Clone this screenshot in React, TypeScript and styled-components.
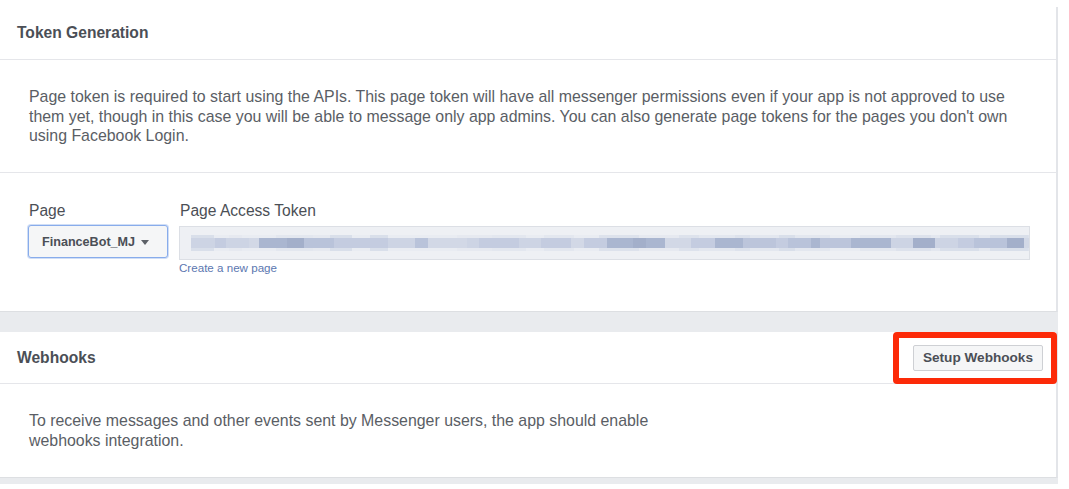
import React from "react";
import styled, { createGlobalStyle } from "styled-components";

const GlobalStyle = createGlobalStyle`
  html, body { margin: 0; padding: 0; background: #ffffff; }
  body { font-family: "Liberation Sans", Arial, Helvetica, sans-serif; }
  * { box-sizing: border-box; }
`;

// Deterministic pseudo-blur pattern for the hidden token
const buildStripe = (seed: number, palette: string[], total: number) => {
  let s = seed;
  const rnd = () => {
    s = (s * 9301 + 49297) % 233280;
    return s / 233280;
  };
  const stops: string[] = [];
  let x = 0;
  while (x < total) {
    const w = 8 + Math.floor(rnd() * 34);
    const c = palette[Math.floor(rnd() * palette.length)];
    stops.push(`${c} ${x}px`, `${c} ${Math.min(x + w, total)}px`);
    x += w;
  }
  return `linear-gradient(90deg, ${stops.join(", ")})`;
};

const midStripe = buildStripe(
  7,
  ["#b9c3da", "#c4cce0", "#aab6d0", "#cdd4e4", "#bcc5db", "#a3afca", "#d2d8e6"],
  840
);
const softStripe = buildStripe(
  31,
  ["#e6e9f0", "#dde2ec", "#e9ecf2", "#d9dfea", "#e3e7ef"],
  840
);

const Page = styled.div`
  width: 1058px;
  margin: 7px 0 0 0;
  background: #e9ebee;
  padding-bottom: 6px;
  display: flex;
  flex-direction: column;
  gap: 20px;
`;

const Card = styled.section`
  background: #ffffff;
  border-right: 2px solid #e3e5e9;
  border-bottom: 1px solid #dddfe2;
`;

const Header = styled.div<{ $height: number }>`
  position: relative;
  height: ${(p) => p.$height}px;
  border-bottom: 1px solid #e5e6ea;
  display: flex;
  align-items: center;
  justify-content: space-between;
  padding: 0 13px 0 17px;
`;

const Title = styled.h2`
  margin: 0;
  font-size: 15.6px;
  font-weight: bold;
  color: #4b4f56;
`;

const Body = styled.div<{ $bordered?: boolean }>`
  padding: 27px 20px 26.5px 29px;
  border-bottom: ${(p) => (p.$bordered ? "1px solid #e5e6ea" : "none")};
`;

const Text = styled.p<{ $width: number }>`
  margin: 0;
  font-size: 15.9px;
  line-height: 19.5px;
  color: #5a5e65;
  max-width: ${(p) => p.$width}px;
`;

const Form = styled.div`
  display: flex;
  gap: 11px;
  padding: 29px 0 35px 28px;
  height: 138px;
`;

const Field = styled.div<{ $width: number }>`
  width: ${(p) => p.$width}px;
  display: flex;
  flex-direction: column;
`;

const Label = styled.label`
  font-size: 15.6px;
  line-height: 18px;
  color: #4b4f56;
  padding-left: 1px;
`;

const Select = styled.div`
  margin-top: 5px;
  height: 33px;
  border: 1px solid #88aceb;
  box-shadow: 0 0 0 1px rgba(120, 160, 230, 0.35);
  border-radius: 3px;
  background: #f5f6f7;
  display: flex;
  align-items: center;
  gap: 6px;
  padding-left: 13px;
  font-size: 12.6px;
  font-weight: bold;
  color: #4b4f56;
`;

const Caret = styled.span`
  width: 0;
  height: 0;
  border-left: 4.5px solid transparent;
  border-right: 4.5px solid transparent;
  border-top: 5px solid #5d6168;
  margin-top: 1px;
`;

const TokenBox = styled.div`
  margin-top: 6px;
  height: 34px;
  border: 1px solid #dcdfe5;
  background: #eef0f4;
  display: flex;
  flex-direction: column;
  justify-content: center;
  padding-left: 11px;
  overflow: hidden;
`;

const Blur = styled.div<{ $h: number; $bg: string }>`
  height: ${(p) => p.$h}px;
  background: ${(p) => p.$bg};
  filter: blur(0.6px);
`;

const Link = styled.a`
  margin-top: 1px;
  font-size: 11.6px;
  line-height: 14px;
  color: #5b77b0;
  text-decoration: none;
`;

const Button = styled.button`
  height: 26px;
  padding: 0 9px;
  background: #f5f6f7;
  border: 1px solid #ced0d4;
  border-radius: 2px;
  font-family: inherit;
  font-size: 13.6px;
  font-weight: bold;
  color: #4b4f56;
`;

const Highlight = styled.div`
  position: absolute;
  top: 0;
  right: -1px;
  width: 164px;
  height: 52px;
  border: 6px solid #fc2a08;
  border-radius: 4px;
  pointer-events: none;
`;

export default function App() {
  return (
    <>
      <GlobalStyle />
      <Page>
        <Card>
          <Header $height={53}>
            <Title>Token Generation</Title>
          </Header>
          <Body $bordered>
            <Text $width={995}>
              Page token is required to start using the APIs. This page token will have all messenger
              permissions even if your app is not approved to use them yet, though in this case you will be
              able to message only app admins. You can also generate page tokens for the pages you don't own
              using Facebook Login.
            </Text>
          </Body>
          <Form>
            <Field $width={140}>
              <Label>Page</Label>
              <Select>
                FinanceBot_MJ
                <Caret />
              </Select>
            </Field>
            <Field $width={851}>
              <Label>Page Access Token</Label>
              <TokenBox>
                <Blur $h={3} $bg={softStripe} />
                <Blur $h={10} $bg={midStripe} />
                <Blur $h={3} $bg={softStripe} />
              </TokenBox>
              <Link>Create a new page</Link>
            </Field>
          </Form>
        </Card>
        <Card>
          <Header $height={52}>
            <Title>Webhooks</Title>
            <Button>Setup Webhooks</Button>
            <Highlight />
          </Header>
          <Body>
            <Text $width={660}>
              To receive messages and other events sent by Messenger users, the app should enable webhooks
              integration.
            </Text>
          </Body>
        </Card>
      </Page>
    </>
  );
}
